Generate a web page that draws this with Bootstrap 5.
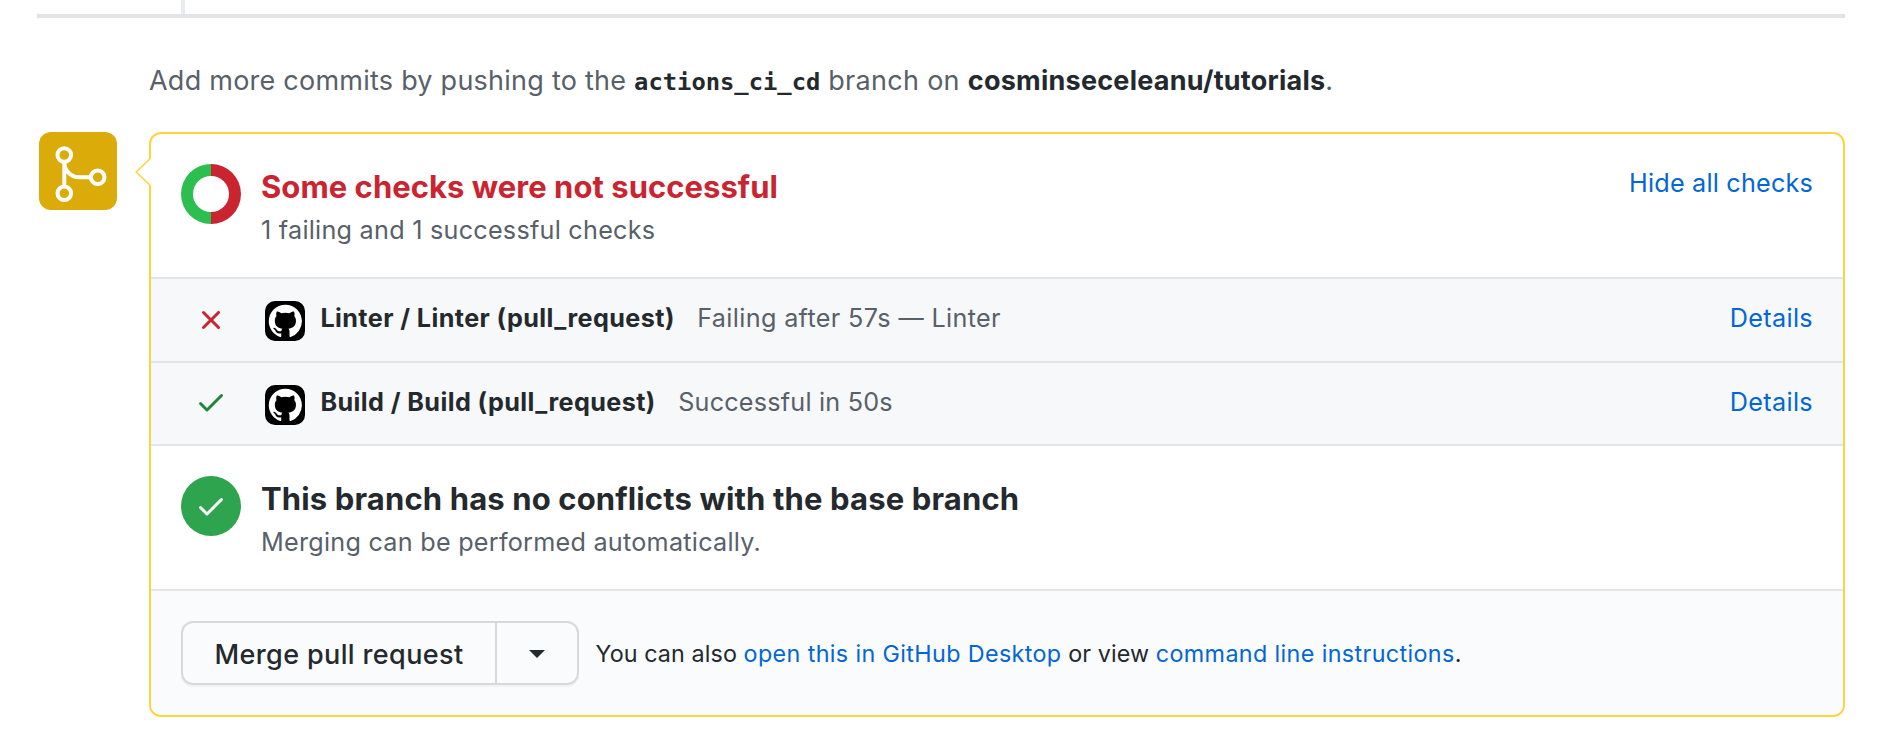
<!DOCTYPE html>
<html lang="en">
<head>
<meta charset="utf-8">
<title>Pull request checks</title>
<link href="https://cdn.jsdelivr.net/npm/bootstrap@5.3.0/dist/css/bootstrap.min.css" rel="stylesheet">
<style>
body{font-family:Inter,sans-serif;color:#24292e;background:#fff;overflow:hidden}
a{color:#0366d6;text-decoration:none}
.page{width:1880px;height:738px;padding-left:37px;padding-right:35px}
.timeline-stub{height:14px;padding-left:144px}
.timeline-stub i{width:4px;height:14px;background:#e9ebef}
.rule{height:4px;background:#e1e4e8}
.hint{margin:42px 0 0 112px;height:72px;font-size:27px;line-height:42px;color:#586069;white-space:pre;letter-spacing:.24px}
.hint b{color:#24292e;font-weight:650}
.hint .on{letter-spacing:.3px}
.hint code{font:700 23.8px/1 "DejaVu Sans Mono",monospace;color:#24292e;letter-spacing:0}
.merge-badge{width:78px;height:78px;border-radius:12px;background:#dbab09;margin:0 32px 0 2px}
.merge-box{border:2px solid #ffd33d;border-radius:12px;height:585px;min-width:0}
.tip{left:-16px;top:23px}
.section{height:145px;padding:30px 30px 0 30px;border-bottom:2px solid #e1e4e8}
.state{width:60px;height:60px;margin-right:20px}
.state-ok{border-radius:50%;background:#2ea44f}
.title{font-size:31px;line-height:38px;font-weight:650;margin:4px 0 0;letter-spacing:.14px}
.title-fail{color:#cb2431;letter-spacing:.04px}
.sub{font-size:25.2px;line-height:48px;color:#586069;letter-spacing:.25px}
.side{font-size:25.2px;line-height:38px;letter-spacing:.2px}
.check{height:84px;background:#f6f8fa;border-bottom:2px solid #e1e4e8;padding:0 30px 0 44px;font-size:25.2px}
.check-last{height:83px}
.check .label{padding-bottom:2px;white-space:pre;letter-spacing:.35px}
.check b{font-weight:650;letter-spacing:.41px}
.result{color:#586069;margin-left:22.4px}
.check-last .result{letter-spacing:.21px}
.app{width:40px;height:40px;border-radius:10px;background:#000;margin:2px 15.4px 0 38px}
.foot{height:124px;padding:0 30px;background:#fafbfc;border-radius:0 0 10px 10px;font-size:23.3px;white-space:pre}
.foot-text{padding-top:2px;letter-spacing:.1px}
.foot-text a{letter-spacing:.38px}
.split{height:64px;border:2px solid #d6d8da;border-radius:12px;box-shadow:0 2px 0 rgba(27,31,35,.04);margin-right:16.5px}
.split .btn{border:0;border-radius:0;font-size:27px;font-weight:500;color:#24292e;padding:4px 0 0;height:60px;letter-spacing:.37px}
.go{width:312px}
.split .more{width:82px;border-left:2px solid #d6d8da;padding-top:2px}
</style>
</head>
<body>
<div class="page">
  <div class="timeline-stub d-flex"><i></i></div>
  <div class="rule"></div>
  <p class="hint">Add more commits by pushing to the <code>actions_ci_cd</code><span class="on"> branch on </span><b>cosminseceleanu/tutorials</b>.</p>
  <div class="d-flex">
    <div class="merge-badge flex-shrink-0">
      <svg width="78" height="78" viewBox="0 0 78 78" fill="none" stroke="#fff" stroke-width="4" class="d-block"><circle cx="25.3" cy="23" r="6.8"/><circle cx="25.3" cy="61.3" r="6.8"/><circle cx="58.7" cy="45.3" r="6.8"/><path d="M25.3 30v24.5M25.3 30c0 8 6 15.3 15 15.3H52"/></svg>
    </div>
    <div class="merge-box flex-grow-1 position-relative">
      <svg class="tip position-absolute" width="16" height="30" viewBox="0 0 16 30"><path d="M16 0 1 15l15 15z" fill="#fff"/><path d="M16 .8 1.2 15 16 29.2" fill="none" stroke="#ffd33d" stroke-width="1.5"/></svg>
      <div class="section d-flex">
        <svg class="state flex-shrink-0" viewBox="0 0 60 60"><path d="M30 0a30 30 0 0 0 0 60V48a18 18 0 0 1 0-36z" fill="#2cbe4e"/><path d="M30 0a30 30 0 0 1 0 60V48a18 18 0 0 0 0-36z" fill="#cb2431"/></svg>
        <div class="flex-grow-1">
          <h1 class="title title-fail">Some checks were not successful</h1>
          <div class="sub">1 failing and 1 successful checks</div>
        </div>
        <a href="#" class="side">Hide all checks</a>
      </div>
      <div class="check d-flex align-items-center">
        <svg width="32" height="32" viewBox="0 0 16 16" fill="#cb2431"><path d="M3.72 3.72a.75.75 0 0 1 1.06 0L8 6.94l3.22-3.22a.75.75 0 1 1 1.06 1.06L9.06 8l3.22 3.22a.75.75 0 1 1-1.06 1.06L8 9.06l-3.22 3.22a.75.75 0 0 1-1.06-1.06L6.94 8 3.72 4.78a.75.75 0 0 1 0-1.06z"/></svg>
        <div class="app"><svg class="d-block" width="40" height="40" viewBox="0 0 40 40"><path id="mark" transform="translate(3.8 3.8) scale(2.07)" fill="#fff" d="M8 0C3.58 0 0 3.58 0 8c0 3.54 2.29 6.53 5.47 7.59.4.07.55-.17.55-.38 0-.19-.01-.82-.01-1.49-2.01.37-2.53-.49-2.69-.94-.09-.23-.48-.94-.82-1.13-.28-.15-.68-.52-.01-.53.63-.01 1.08.58 1.23.82.72 1.21 1.87.87 2.33.66.07-.52.28-.87.51-1.07-1.78-.2-3.64-.89-3.64-3.95 0-.87.31-1.59.82-2.15-.08-.2-.36-1.02.08-2.12 0 0 .67-.21 2.2.82.64-.18 1.32-.27 2-.27s1.36.09 2 .27c1.53-1.04 2.2-.82 2.2-.82.44 1.1.16 1.92.08 2.12.51.56.82 1.27.82 2.15 0 3.07-1.87 3.75-3.65 3.95.29.25.54.73.54 1.48 0 1.07-.01 1.93-.01 2.2 0 .21.15.46.55.38A8.013 8.013 0 0 0 16 8c0-4.42-3.58-8-8-8z"/></svg></div>
        <div class="label flex-grow-1"><b>Linter / Linter (pull_request)</b><span class="result">Failing after 57s — Linter</span></div>
        <a href="#" class="label">Details</a>
      </div>
      <div class="check check-last d-flex align-items-center">
        <svg class="mb-1" width="32" height="32" viewBox="0 0 16 16" fill="#22863a"><path d="M13.78 4.22a.75.75 0 0 1 0 1.06l-7.25 7.25a.75.75 0 0 1-1.06 0L2.22 9.28a.75.75 0 0 1 1.06-1.06L6 10.94l6.72-6.72a.75.75 0 0 1 1.06 0z" id="tick"/></svg>
        <div class="app"><svg class="d-block" width="40" height="40" viewBox="0 0 40 40"><use href="#mark"/></svg></div>
        <div class="label flex-grow-1"><b>Build / Build (pull_request)</b><span class="result">Successful in 50s</span></div>
        <a href="#" class="label">Details</a>
      </div>
      <div class="section d-flex">
        <div class="state state-ok flex-shrink-0 d-flex align-items-center justify-content-center"><svg width="32" height="32" viewBox="0 0 16 16" fill="#fff"><use href="#tick"/></svg></div>
        <div>
          <h2 class="title">This branch has no conflicts with the base branch</h2>
          <div class="sub">Merging can be performed automatically.</div>
        </div>
      </div>
      <div class="foot d-flex align-items-center">
        <div class="split d-flex"><button class="btn go">Merge pull request</button><button class="btn more d-flex align-items-center justify-content-center" aria-label="Merge options"><svg width="16" height="8" viewBox="0 0 16 8"><path d="M0 0h16L8 8z" fill="#24292e"/></svg></button></div>
        <div class="foot-text">You can also <a href="#">open this in GitHub Desktop</a> or view <a href="#">command line instructions</a>.</div>
      </div>
    </div>
  </div>
</div>
<script src="https://cdn.jsdelivr.net/npm/bootstrap@5.3.0/dist/js/bootstrap.bundle.min.js"></script>
</body>
</html>
